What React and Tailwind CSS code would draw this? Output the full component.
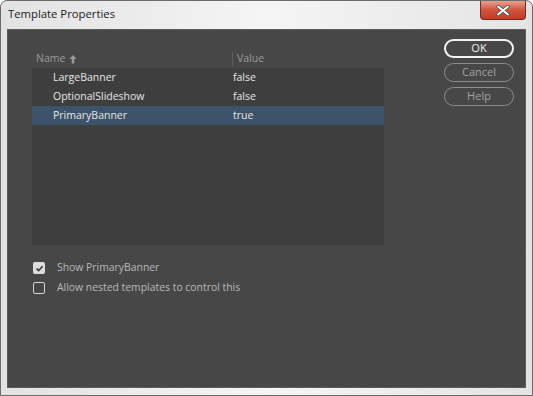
import React from 'react';

const rows = [
  { name: 'LargeBanner', value: 'false' },
  { name: 'OptionalSlideshow', value: 'false' },
  { name: 'PrimaryBanner', value: 'true', selected: true },
];

function CheckRow({ checked, label }) {
  return (
    <div className="flex h-[20px] items-center">
      <div
        className={
          checked
            ? 'ml-[1px] flex h-[12px] w-[12px] items-center justify-center rounded-[2px] bg-[#dcdcdc]'
            : 'ml-[1px] h-[12px] w-[12px] rounded-[2px] border border-[#d4d4d4]'
        }
      >
        {checked && (
          <svg width="9" height="9" viewBox="0 0 9 9">
            <path d="M1.5 4.5 L3.6 6.6 L7.6 2.2" fill="none" stroke="#3a3a3a" strokeWidth="1.6" />
          </svg>
        )}
      </div>
      <span className="ml-[12px] text-[10.4px] text-[#b9b9b9]">{label}</span>
    </div>
  );
}

export default function App() {
  return (
    <div
      className="flex h-[396px] w-[533px] flex-col rounded-t-[7px] border border-[#6b6b6b] bg-gradient-to-r from-[#e2e2e2] via-[#f5f5f5] to-[#e4e4e4]"
      style={{ fontFamily: '"Open Sans", "Noto Sans", sans-serif' }}
    >
      <div className="flex h-[28px] items-start">
        <span className="ml-[7px] mt-[5px] text-[11.3px] text-[#1c1c1c]">Template Properties</span>
        <div className="ml-auto mr-[6px] flex h-[19px] w-[46px] items-center justify-center rounded-b-[4px] border border-t-0 border-[#7a2a20] bg-gradient-to-b from-[#e8a091] via-[#d0533c] to-[#c23a22]">
          <svg width="14" height="11" viewBox="0 0 14 11">
            <path d="M2 1.5 L12 9.5 M12 1.5 L2 9.5" stroke="#4a4a4a" strokeWidth="3.4" strokeLinecap="round" />
            <path d="M2 1.5 L12 9.5 M12 1.5 L2 9.5" stroke="#ffffff" strokeWidth="2" strokeLinecap="round" />
          </svg>
        </div>
      </div>

      <div className="mx-[6px] mb-[7px] flex flex-1 border border-[#5c5c5c] bg-[#474747]">
        <div className="ml-[24px] mt-[20px] w-[352px]">
          <div className="flex h-[17px] items-center text-[10.5px] text-[#9b9b9b]">
            <div className="flex w-[200px] items-center pl-[4px]">
              <span>Name</span>
              <svg className="ml-[4px]" width="8" height="10" viewBox="0 0 8 10">
                <path d="M4 1 L7.5 5 H5.2 V9.5 H2.8 V5 H0.5 Z" fill="#9b9b9b" />
              </svg>
            </div>
            <div className="h-[14px] w-[1px] bg-[#5e5e5e]" />
            <span className="ml-[4px]">Value</span>
          </div>
          <div className="mt-[1px] h-[177px] bg-[#3e3e3e]">
            {rows.map((r) => (
              <div
                key={r.name}
                className={
                  'flex h-[19px] items-center text-[10.5px] text-[#e6e6e6] ' +
                  (r.selected ? 'bg-[#3d5369]' : '')
                }
              >
                <span className="w-[201px] pl-[21px]">{r.name}</span>
                <span>{r.value}</span>
              </div>
            ))}
          </div>
          <div className="mt-[13px]">
            <CheckRow checked label="Show PrimaryBanner" />
            <CheckRow label="Allow nested templates to control this" />
          </div>
        </div>

        <div className="ml-auto mr-[11px] mt-[9px] flex w-[70px] flex-col gap-[5px]">
          <div className="flex h-[19px] items-center justify-center rounded-full border-2 border-[#f2f2f2] text-[11px] text-[#f2f2f2]">
            OK
          </div>
          <div className="flex h-[19px] items-center justify-center rounded-full border border-[#8c8c8c] text-[11px] text-[#a3a3a3]">
            Cancel
          </div>
          <div className="flex h-[19px] items-center justify-center rounded-full border border-[#8c8c8c] text-[11px] text-[#a3a3a3]">
            Help
          </div>
        </div>
      </div>
    </div>
  );
}
